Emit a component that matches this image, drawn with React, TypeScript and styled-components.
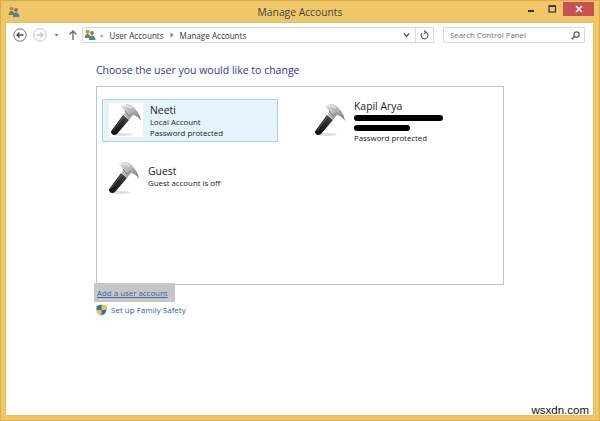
import { createGlobalStyle } from 'styled-components';
import styled from 'styled-components';
import { ReactNode } from 'react';

const GlobalStyle = createGlobalStyle`
  html, body {
    margin: 0;
    padding: 0;
    background: #f0c768;
  }
  body {
    font-family: "Open Sans", "Noto Sans", sans-serif;
    color: #1e1e1e;
  }
`;

const Frame = styled.div`
  position: relative;
  width: 600px;
  height: 421px;
  box-sizing: border-box;
  display: flex;
  flex-direction: column;
  background: #f0c768;
  border: 1px solid #dcae4a;
  overflow: hidden;
`;

const TitleBar = styled.div`
  position: relative;
  display: flex;
  align-items: center;
  height: 21px;
  padding-left: 7px;
  flex: none;
`;

const Title = styled.div`
  position: absolute;
  left: 0;
  right: 0;
  top: 3px;
  text-align: center;
  font-size: 10.3px;
  line-height: 16px;
  color: #444;
`;

const WindowButtons = styled.div`
  margin-left: auto;
  margin-right: 5px;
  margin-top: -5px;
  display: flex;
  align-items: flex-start;
`;

const WindowButton = styled.div<{ $close?: boolean }>`
  width: ${(p) => (p.$close ? '31px' : '21px')};
  height: 14px;
  display: flex;
  align-items: center;
  justify-content: center;
  background: ${(p) => (p.$close ? '#c75050' : 'transparent')};
`;

const Content = styled.div`
  flex: 1;
  margin: 0 5px 4px 4px;
  background: #fff;
  border: 1px solid #e3bf6e;
  display: flex;
  flex-direction: column;
  min-height: 0;
`;

const Toolbar = styled.div`
  display: flex;
  align-items: center;
  height: 16px;
  margin-top: 4px;
  padding-left: 7px;
  flex: none;
`;

const NavIcons = styled.div`
  display: flex;
  align-items: center;
  gap: 6px;
  width: 69px;
  flex: none;
`;

const NavDrop = styled.svg`
  margin-left: -6px;
  margin-right: -6px;
`;

const AddressBox = styled.div`
  width: 352px;
  height: 16px;
  box-sizing: border-box;
  border: 1px solid #d9d9d9;
  display: flex;
  align-items: center;
  font-size: 8.1px;
  padding-left: 1px;
  color: #333;
  flex: none;
`;

const Crumb = styled.span`
  margin: 0 6px;
  white-space: nowrap;
`;

const Chevrons = styled.span`
  font-size: 7px;
  color: #666;
  margin-left: 4px;
`;

const AddressEnd = styled.div`
  margin-left: auto;
  display: flex;
  align-items: center;
  height: 100%;
`;

const AddressTool = styled.div<{ $divided?: boolean }>`
  width: 17px;
  height: 100%;
  display: flex;
  align-items: center;
  justify-content: center;
  border-left: ${(p) => (p.$divided ? '1px solid #d9d9d9' : 'none')};
`;

const SearchBox = styled.div`
  width: 142px;
  height: 16px;
  box-sizing: border-box;
  border: 1px solid #d9d9d9;
  margin-left: 9px;
  padding: 0 4px 0 6px;
  display: flex;
  align-items: center;
  justify-content: space-between;
  font-size: 7.8px;
  color: #6d6d6d;
  flex: none;
`;

const Main = styled.div`
  padding: 19px 0 0 90px;
  display: flex;
  flex-direction: column;
  align-items: flex-start;
`;

const Heading = styled.h1`
  margin: 0 0 8px;
  font-size: 10.5px;
  line-height: 16px;
  font-weight: 400;
  color: #1f3d96;
`;

const AccountList = styled.div`
  width: 408px;
  height: 199px;
  box-sizing: border-box;
  border: 1px solid #c4c4c4;
  padding: 12px 0 0 3px;
  display: grid;
  grid-template-columns: 206px 1fr;
  grid-auto-rows: min-content;
  row-gap: 15px;
`;

const Tile = styled.div<{ $selected?: boolean; $shift?: number }>`
  width: 176px;
  height: 43px;
  box-sizing: border-box;
  margin-left: ${(p) => p.$shift ?? 0}px;
  padding: 3px 6px;
  display: flex;
  align-items: flex-start;
  gap: 7px;
  background: ${(p) => (p.$selected ? '#e5f3fb' : 'transparent')};
  border: 1px solid ${(p) => (p.$selected ? '#a5d5ec' : 'transparent')};
`;

const Avatar = styled.div<{ $selected?: boolean }>`
  width: 34px;
  height: 34px;
  flex: none;
  background: ${(p) => (p.$selected ? '#fff' : 'transparent')};
`;

const TileText = styled.div<{ $offset?: number }>`
  display: flex;
  flex-direction: column;
  margin-top: ${(p) => p.$offset ?? 0}px;
`;

const Name = styled.div`
  font-size: 10.4px;
  line-height: 14px;
  color: #222;
`;

const Detail = styled.div`
  font-size: 7.85px;
  line-height: 11px;
  color: #222;
  white-space: nowrap;
`;

const Scribble = styled.div<{ $width: number }>`
  width: ${(p) => p.$width}px;
  height: 6px;
  margin: 2px 0;
  border-radius: 3px;
  background: #000;
`;

const AddLink = styled.a`
  display: block;
  margin: -2px 0 0 -2px;
  width: 81px;
  height: 19px;
  box-sizing: border-box;
  padding-left: 3px;
  background: #c6c6c6;
  font-size: 7.9px;
  line-height: 21px;
  color: #3a6aa5;
  text-decoration: underline;
`;

const FamilyRow = styled.div`
  display: flex;
  align-items: center;
  gap: 4px;
  margin-top: 1px;
  font-size: 8px;
  line-height: 14px;
  color: #1c5fa8;
`;

const Watermark = styled.div`
  position: absolute;
  right: 10px;
  bottom: 3px;
  font-family: "Liberation Sans", sans-serif;
  font-size: 11.5px;
  line-height: 14px;
  color: #111;
`;

const Hammer = ({ id }: { id: string }) => (
  <svg width="34" height="34" viewBox="0 0 34 34">
    <defs>
      <linearGradient id={`head-${id}`} x1="0" y1="0" x2="1" y2="1">
        <stop offset="0" stopColor="#e0e0e0" />
        <stop offset="0.5" stopColor="#b4b4b4" />
        <stop offset="1" stopColor="#6c6c6c" />
      </linearGradient>
      <linearGradient id={`handle-${id}`} x1="0" y1="1" x2="1" y2="0">
        <stop offset="0" stopColor="#0c0c0c" />
        <stop offset="0.6" stopColor="#2a2a2a" />
        <stop offset="1" stopColor="#555" />
      </linearGradient>
    </defs>
    <ellipse cx="13" cy="31.5" rx="11" ry="1.4" fill="#c8c8c8" opacity="0.6" />
    <path d="M14 12 L20 17 L8 31 Q5 33 3 31 Q1 29 3 27Z" fill={`url(#handle-${id})`} />
    <path d="M4 27.5 L14.5 14" stroke="#666" strokeWidth="0.8" fill="none" />
    <path
      d="M12 3.5 Q15 1 18 1 Q24 2 28 8 Q31 12 32 18 Q29 13 24 12 L20 17 L15 12 L16 8 Q14 5 12 3.5Z"
      fill={`url(#head-${id})`}
    />
    <path d="M16 8 L20 13 L23.5 10" stroke="#777" strokeWidth="1" fill="none" />
    <path d="M13 3.5 Q18 1.5 23 5" stroke="#f2f2f2" strokeWidth="1" fill="none" />
  </svg>
);

const UsersIcon = () => (
  <svg width="12" height="12" viewBox="0 0 12 12">
    <circle cx="3.6" cy="2.8" r="2" fill="#b98f55" />
    <path d="M0.5 9 Q1 5 3.6 5 Q6.2 5 6.6 9Z" fill="#5f8f4e" />
    <circle cx="8" cy="4" r="1.9" fill="#9c7440" />
    <path d="M4.8 11 Q5 6.5 8 6.5 Q11 6.5 11.5 11Z" fill="#4a82a8" />
  </svg>
);

const ShieldIcon = () => (
  <svg width="11" height="12" viewBox="0 0 11 12">
    <path d="M5.5 0.5 L10.5 2 V6 Q10 10 5.5 11.5 Q1 10 0.5 6 V2Z" fill="#2f6fc0" />
    <path d="M5.5 0.5 L10.5 2 V6 H5.5Z" fill="#f1c232" />
    <path d="M5.5 6 H0.5 Q1 10 5.5 11.5Z" fill="#f1c232" />
  </svg>
);

const BackIcon = ({ muted }: { muted?: boolean }) => (
  <svg width="14" height="14" viewBox="0 0 14 14" fill="none" stroke={muted ? '#c4c4c4' : '#6f6f6f'}>
    <circle cx="7" cy="7" r="6.2" strokeWidth="1" />
    <path
      d={muted ? 'M3.5 7H10M7.5 4.5L10 7L7.5 9.5' : 'M10.5 7H4M6.5 4.5L4 7L6.5 9.5'}
      strokeWidth="1.3"
      stroke={muted ? '#c4c4c4' : '#4d4d4d'}
    />
  </svg>
);

const AccountTile = ({
  id,
  children,
  selected,
  offset,
  shift,
}: {
  id: string;
  children: ReactNode;
  selected?: boolean;
  offset?: number;
  shift?: number;
}) => (
  <Tile $selected={selected} $shift={shift}>
    <Avatar $selected={selected}>
      <Hammer id={id} />
    </Avatar>
    <TileText $offset={offset}>{children}</TileText>
  </Tile>
);

export default function App() {
  return (
    <>
      <GlobalStyle />
      <Frame>
        <TitleBar>
          <UsersIcon />
          <Title>Manage Accounts</Title>
          <WindowButtons>
            <WindowButton>
              <svg width="7" height="7" viewBox="0 0 7 7">
                <rect x="0" y="4" width="6" height="2" fill="#333" />
              </svg>
            </WindowButton>
            <WindowButton>
              <svg width="9" height="8" viewBox="0 0 9 8" fill="none">
                <rect x="1" y="1" width="6.5" height="6" stroke="#333" strokeWidth="1.2" />
                <rect x="1" y="0.5" width="6.5" height="1.5" fill="#333" />
              </svg>
            </WindowButton>
            <WindowButton $close>
              <svg width="8" height="8" viewBox="0 0 8 8">
                <path d="M1 1L7 7M7 1L1 7" stroke="#fff" strokeWidth="1.6" />
              </svg>
            </WindowButton>
          </WindowButtons>
        </TitleBar>
        <Content>
          <Toolbar>
            <NavIcons>
              <BackIcon />
              <BackIcon muted />
              <NavDrop width="21" height="14" viewBox="0 0 21 14">
                <path d="M7.5 6H11.5L9.5 8.5Z" fill="#777" />
              </NavDrop>
              <svg width="10" height="12" viewBox="0 0 10 12" fill="none" stroke="#666" strokeWidth="1.3">
                <path d="M5 11V2M1.5 5.5L5 2L8.5 5.5" />
              </svg>
            </NavIcons>
            <AddressBox>
              <UsersIcon />
              <Chevrons>«</Chevrons>
              <Crumb>User Accounts</Crumb>
              <svg width="4" height="6" viewBox="0 0 4 6">
                <path d="M0.5 0.5L3.5 3L0.5 5.5Z" fill="#777" />
              </svg>
              <Crumb>Manage Accounts</Crumb>
              <AddressEnd>
                <AddressTool>
                  <svg width="7" height="6" viewBox="0 0 7 6" fill="none" stroke="#555" strokeWidth="1.3">
                    <path d="M1 1.5L3.5 4.5L6 1.5" />
                  </svg>
                </AddressTool>
                <AddressTool $divided>
                  <svg width="9" height="10" viewBox="0 0 9 10" fill="none" stroke="#666" strokeWidth="1.2">
                    <path d="M5.5 2.2A3.4 3.4 0 1 1 2 3.2" />
                    <path d="M4 0.5L6 2.2L4 3.8" />
                  </svg>
                </AddressTool>
              </AddressEnd>
            </AddressBox>
            <SearchBox>
              Search Control Panel
              <svg width="9" height="9" viewBox="0 0 9 9" fill="none" stroke="#555" strokeWidth="1.2">
                <circle cx="5.5" cy="3.5" r="2.6" />
                <path d="M3.5 5.5L0.8 8.2" strokeWidth="1.6" />
              </svg>
            </SearchBox>
          </Toolbar>
          <Main>
            <Heading>Choose the user you would like to change</Heading>
            <AccountList>
              <AccountTile id="neeti" selected shift={2}>
                <Name>Neeti</Name>
                <Detail>Local Account</Detail>
                <Detail>Password protected</Detail>
              </AccountTile>
              <AccountTile id="kapil" offset={-4}>
                <Name>Kapil Arya</Name>
                <Scribble $width={89} />
                <Scribble $width={56} />
                <Detail>Password protected</Detail>
              </AccountTile>
              <AccountTile id="guest" offset={3}>
                <Name>Guest</Name>
                <Detail>Guest account is off</Detail>
              </AccountTile>
            </AccountList>
            <AddLink>Add a user account</AddLink>
            <FamilyRow>
              <ShieldIcon />
              Set up Family Safety
            </FamilyRow>
          </Main>
        </Content>
        <Watermark>wsxdn.com</Watermark>
      </Frame>
    </>
  );
}
